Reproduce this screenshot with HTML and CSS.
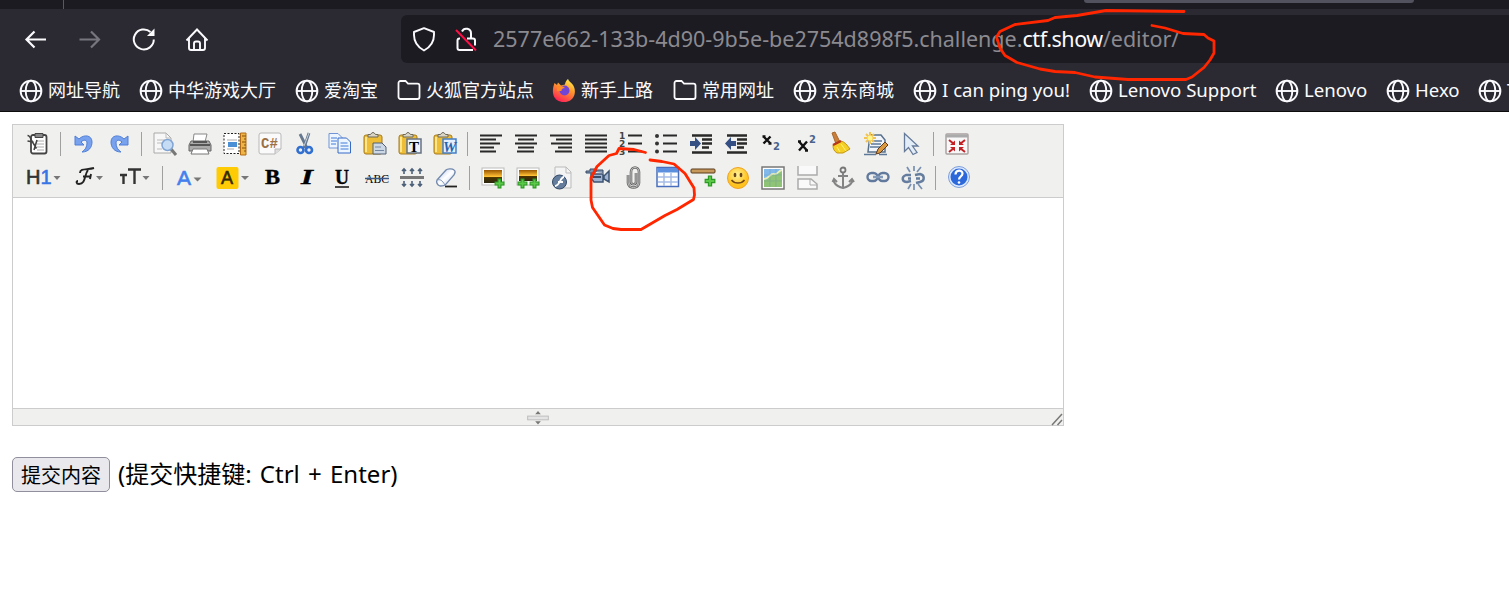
FILE: index.html
```html
<!DOCTYPE html>
<html lang="zh">
<head>
<meta charset="utf-8">
<title>Editor</title>
<link rel="stylesheet" href="styles.css">
</head>
<body>
<svg class="defs" width="0" height="0">
  <defs>
    <linearGradient id="fox" x1=".8" y1="0" x2=".3" y2="1"><stop offset="0" stop-color="#fff44f"/><stop offset=".4" stop-color="#ff9a2a"/><stop offset="1" stop-color="#ff2058"/></linearGradient>
    <linearGradient id="sunset" x1="0" y1="0" x2="0" y2="1"><stop offset="0" stop-color="#9a5600"/><stop offset=".5" stop-color="#ffc034"/><stop offset=".58" stop-color="#4a3300"/><stop offset="1" stop-color="#2c2710"/></linearGradient>
    <linearGradient id="eraser" x1="0" y1="0" x2="1" y2="1"><stop offset="0" stop-color="#a9bfe6"/><stop offset=".5" stop-color="#fff"/><stop offset="1" stop-color="#b8c9e8"/></linearGradient>
    <radialGradient id="face" cx=".45" cy=".35"><stop offset="0" stop-color="#fff49a"/><stop offset="1" stop-color="#ffc31d"/></radialGradient>
    <symbol id="globe" viewBox="0 0 24 24"><g fill="none" stroke="#fbfbfe" stroke-width="1.9"><circle cx="12" cy="12" r="10.4"/><ellipse cx="12" cy="12" rx="5.3" ry="10.4"/><path d="M1.6 12h20.8"/></g></symbol>
    <symbol id="folder" viewBox="0 0 24 24"><path d="M3.5 2h5l2.5 2.6h9.5a2 2 0 0 1 2 2V18a2 2 0 0 1-2 2h-17a2 2 0 0 1-2-2V4a2 2 0 0 1 2-2z" fill="none" stroke="#fbfbfe" stroke-width="1.8"/></symbol>
    <symbol id="board" viewBox="0 0 24 24"><rect x="1" y="3" width="18" height="19" rx="2" fill="#edbd38" stroke="#a57b21"/><path d="M3 5v15" stroke="#ffe68a" stroke-width="2"/><path d="M5 5h10V2.500h-2.500L11 .7H9L7.500 2.500H5z" fill="#d9d6c8" stroke="#6e6a5b"/></symbol>
    <symbol id="plus" viewBox="0 0 10 10"><path d="M3.700 1h2.600v2.700H9v2.600H6.300V9H3.700V6.300H1V3.700h2.700z" fill="#5cc84a" stroke="#2b9a22"/></symbol>
  </defs>
</svg>

<header class="browser">
  <div class="tabs"><i class="tab-line"></i><i class="active-tab"></i></div>
  <div class="nav">
    <div class="nav-buttons">
      <svg viewBox="0 0 24 24"><path d="M22 12.500H2.500M10.500 4.500l-8 8 8 8" fill="none" stroke="#fbfbfe" stroke-width="2.200"/></svg>
      <svg viewBox="0 0 24 24"><path d="M1.500 12.500H21M13 4.500l8 8-8 8" fill="none" stroke="#77767e" stroke-width="2.200"/></svg>
      <svg viewBox="0 0 24 24"><path d="M21.800 12.500A10 10 0 1 1 18.500 5" fill="none" stroke="#fbfbfe" stroke-width="2"/><path d="M22.500 1.500V9H15z" fill="#fbfbfe"/></svg>
      <svg viewBox="0 0 24 24"><path d="M.5 13.500L11 2.500l10.500 11M3 11.500V21a2 2 0 0 0 2 2h12a2 2 0 0 0 2-2v-9.500M8 23v-6.500a2 2 0 0 1 2-2h2a2 2 0 0 1 2 2V23" fill="none" stroke="#fbfbfe" stroke-width="1.900"/></svg>
    </div>
    <div class="address">
      <svg viewBox="0 0 24 24"><path d="M12 1.200L22 5v3c0 8-3.500 12-10 15.500C5.500 20 2 16 2 8V5z" fill="none" stroke="#fbfbfe" stroke-width="1.900" stroke-linejoin="round"/></svg>
      <svg viewBox="0 0 24 24"><path d="M6 11.500H5.500a2 2 0 0 0-2 2V21a2 2 0 0 0 2 2H19M13 11.500h6a2 2 0 0 1 2 2v5M8 4.500a4.700 4.700 0 0 1 9 2v5" fill="none" stroke="#fbfbfe" stroke-width="2"/><path d="M2 3l20 20.500" stroke="#ff0f45" stroke-width="1.900"/></svg>
      <span class="url">2577e662-133b-4d90-9b5e-be2754d898f5.challenge.<b>ctf.show</b>/editor/</span>
    </div>
  </div>
  <nav class="bookmarks">
    <a class="w120"><svg><use href="#globe"/></svg><span>网址导航</span></a>
    <a class="w156"><svg><use href="#globe"/></svg><span>中华游戏大厅</span></a>
    <a class="w102"><svg><use href="#globe"/></svg><span>爱淘宝</span></a>
    <a class="w155"><svg><use href="#folder"/></svg><span>火狐官方站点</span></a>
    <a class="w121"><svg viewBox="0 0 24 24"><path d="M2.500 4l2.500 2 1-2.500 3 3 4-1c0-2 1.500-4.500 3-5.500 1 3 3 3 5 6 4 6 2 17-9 17S-1 13 2.500 4z" fill="url(#fox)"/><circle cx="12.500" cy="11.500" r="5" fill="#7045d5"/><path d="M5 8c3-2 6-1 8 1-2 0-4 1-3.500 3L5 12z" fill="#ff8a28"/></svg><span>新手上路</span></a>
    <a class="w120"><svg><use href="#folder"/></svg><span>常用网址</span></a>
    <a class="w120"><svg><use href="#globe"/></svg><span>京东商城</span></a>
    <a class="w176"><svg><use href="#globe"/></svg><span class="lat">I can ping you!</span></a>
    <a class="w186"><svg><use href="#globe"/></svg><span class="lat">Lenovo Support</span></a>
    <a class="w111"><svg><use href="#globe"/></svg><span class="lat">Lenovo</span></a>
    <a class="w92"><svg><use href="#globe"/></svg><span class="lat">Hexo</span></a>
    <a class="w120"><svg><use href="#globe"/></svg><span class="lat">T</span></a>
  </nav>
</header>

<main>
  <section class="editor">
    <div class="toolbar">
      <div class="row">
        <span class="btn"><svg viewBox="0 0 24 24"><rect x="5" y="3" width="15.500" height="18.500" rx="2" fill="#fff" stroke="#444" stroke-width="1.800"/><path d="M9 1.500h8v4H9z" fill="#888" stroke="#444"/><path d="M11 9h7M11 12h7M11 15h7M11 18h7" stroke="#aaa"/><path d="M1.500 3.500c2 0 3 2 4 5l5 8M1.500 9l6 1M11 8L8 18" fill="none" stroke="#444" stroke-width="1.600"/></svg></span>
        <i class="sep"></i>
        <span class="btn"><svg viewBox="0 0 24 24"><path d="M3 4v9h9l-3-3c3-3 6-2 6 1 0 4-2 7-5 9 7 0 10-5 10-10C20 3 12 2 7 7z" fill="#79a2ee" stroke="#4f7fd6"/></svg></span>
        <span class="btn"><svg viewBox="0 0 24 24"><path d="M21 4v9h-9l3-3c-3-3-6-2-6 1 0 4 2 7 5 9-7 0-10-5-10-10C4 3 12 2 17 7z" fill="#79a2ee" stroke="#4f7fd6"/></svg></span>
        <i class="sep"></i>
        <span class="btn"><svg viewBox="0 0 24 24"><path d="M1 1h12l5 5v15H1z" fill="#f7f7f7" stroke="#aaa"/><path d="M13 1v5h5M4 8h8M4 11h5M4 17h5" fill="none" stroke="#bbb"/><path d="M18 17l5 6" stroke="#777" stroke-width="3"/><circle cx="14.500" cy="13" r="5.500" fill="#c6dcf5" stroke="#80a5d5" stroke-width="1.500"/></svg></span>
        <span class="btn"><svg viewBox="0 0 24 24"><path d="M6 2h13l-2 8H5z" fill="#fff" stroke="#888"/><path d="M3 9h18l2 4v6H1v-6z" fill="#aaa" stroke="#666"/><path d="M2 13h20M5 10h14" stroke="#555" stroke-width="2"/><path d="M5 17h14l2 5H3z" fill="#fff" stroke="#777"/></svg></span>
        <span class="btn"><svg viewBox="0 0 24 24"><path d="M1 1.500h15v20H1z" fill="#fff" stroke="#222" stroke-dasharray="2 1.500"/><path d="M4 8h10M4 17h7" stroke="#aaa"/><path d="M5 10h9v5H5z" fill="#4b8fd5"/><path d="M17.500 1h5.500v22h-5.500z" fill="#edb448" stroke="#b46b11"/><path d="M19 4h4M21 7h2M19 10h4M21 13h2M19 16h4M21 19h2" stroke="#8c4e00"/></svg></span>
        <span class="btn"><svg viewBox="0 0 24 24"><path d="M3 1h18a2 2 0 0 1 2 2v14l-6 5H3a2 2 0 0 1-2-2V3a2 2 0 0 1 2-2z" fill="#fafafa" stroke="#b8b8b8"/><path d="M23 17h-6v5" fill="#ddd" stroke="#bbb"/><text x="3" y="16" class="mono code">C#</text></svg></span>
        <span class="btn"><svg viewBox="0 0 24 24"><path d="M7 2l7 14M16 1l-5 15" stroke="#66788f" stroke-width="2.800"/><path d="M16 1l-5 13" stroke="#c4d0dc"/><ellipse cx="7.500" cy="18" rx="3" ry="3" fill="none" stroke="#316fd0" stroke-width="2.600"/><ellipse cx="16" cy="18" rx="3" ry="3" fill="none" stroke="#316fd0" stroke-width="2.600"/></svg></span>
        <span class="btn"><svg viewBox="0 0 24 24"><g fill="#edf5ff" stroke="#7195d5"><path d="M1 1.500h9l4 4V16H1z"/><path d="M10 6h8.500l4 4v11H10z" stroke="#376bc6"/></g><path d="M3 6h6M3 9h6M3 12h5M12.500 11h7M12.500 14h8M12.500 17h8" stroke="#79a4e4" stroke-width="1.500"/></svg></span>
        <span class="btn"><svg viewBox="0 0 24 24"><use href="#board"/><path d="M10 11h9l4 4v7H10z" fill="#cdd8e6" stroke="#526071"/><path d="M12 15h6M12 18.500h9" stroke="#7488a2"/></svg></span>
        <span class="btn"><svg viewBox="0 0 24 24"><use href="#board"/><path d="M9 7h14v14H9z" fill="#edf2f8" stroke="#657283" stroke-width="1.500"/><text x="11" y="19.500" class="serif letter">T</text></svg></span>
        <span class="btn"><svg viewBox="0 0 24 24"><use href="#board"/><path d="M10 7h13v14H10z" fill="#e2efff" stroke="#447fc6" stroke-width="1.500"/><text x="10" y="19.500" class="serif word" textLength="13">W</text></svg></span>
        <i class="sep"></i>
        <span class="btn"><svg viewBox="0 0 24 24"><path d="M1 3.500h22M1 7.500h16M1 11.500h20M1 15.500h14M1 19.500h16" class="rule"/></svg></span>
        <span class="btn"><svg viewBox="0 0 24 24"><path d="M1 3.500h22M4 7.500h16M1 11.500h22M4 15.500h16M3 19.500h17" class="rule"/></svg></span>
        <span class="btn"><svg viewBox="0 0 24 24"><path d="M1 3.500h22M7 7.500h16M2 11.500h21M9 15.500h14M6 19.500h17" class="rule"/></svg></span>
        <span class="btn"><svg viewBox="0 0 24 24"><path d="M1 3.500h22M1 7.500h22M1 11.500h22M1 15.500h22M1 19.500h22" class="rule"/></svg></span>
        <span class="btn"><svg viewBox="0 0 24 24"><path d="M9 3.500h14M9 11.500h14M9 19.500h14" class="rule"/><text x="0" y="7" class="num">1</text><text x="0" y="15" class="num">2</text><text x="0" y="23" class="num">3</text></svg></span>
        <span class="btn"><svg viewBox="0 0 24 24"><path d="M9 3.500h14M9 11.500h14M9 19.500h14" class="rule"/><g fill="#333"><circle cx="3" cy="4" r="2"/><circle cx="3" cy="11.500" r="2"/><circle cx="3" cy="19.500" r="2"/></g></svg></span>
        <span class="btn"><svg viewBox="0 0 24 24"><path d="M3 3.500h20M13 7.500h10M13 11.500h10M13 15.500h7M3 20.500h20" class="rule heavy"/><path d="M1 9h5V5l6 6.500L6 18v-4H1z" fill="#344f83"/></svg></span>
        <span class="btn"><svg viewBox="0 0 24 24"><path d="M3 3.500h20M13 7.500h10M13 11.500h10M13 15.500h7M3 20.500h20" class="rule heavy"/><path d="M12 9H7V5l-6 6.500L7 18v-4h5z" fill="#344f83"/></svg></span>
        <span class="btn"><svg viewBox="0 0 24 24"><path d="M4.500 4.500l7 7M11.500 4.500l-7 7M3.500 4.500h3M9.500 11.500h3" stroke="#111" stroke-width="2.400"/><text x="14" y="18" class="small">2</text></svg></span>
        <span class="btn"><svg viewBox="0 0 24 24"><path d="M5 9.500l8 9M13 9.500l-8 9M4 9.500h3M11 18.500h3" stroke="#111" stroke-width="2.400"/><text x="15" y="11" class="small">2</text></svg></span>
        <span class="btn"><svg viewBox="0 0 24 24"><path d="M3 1l3-1 5 10-4 2z" fill="#cc7e38" stroke="#a5682c"/><path d="M4 13l8-4c4 1 6 4 9 8l-7 4H8c-3-2-4-4-4-8z" fill="#f6cf24" stroke="#c39712"/><path d="M4 13l8-4" stroke="#b53818" stroke-width="2.500"/><path d="M8 15l3 5M12 12l5 7" stroke="#fff178"/></svg></span>
        <span class="btn"><svg viewBox="0 0 24 24"><path d="M6 3h11l4 5v12H4z" fill="#f2f6fb" stroke="#57708c" stroke-width="1.500"/><path d="M8 9h10M7 12h10M6 15h10M0 22.500h12M15 22.500h8" stroke="#5d7898" stroke-width="1.500"/><path d="M6 0v12M0 6h12M2 2l8 8M10 2l-8 8" stroke="#f2c351" stroke-width="2"/><circle cx="6" cy="6" r="2.500" fill="#fff78b"/><path d="M12 22l2-5 7-7 3 3-8 8z" fill="#db9940" stroke="#5d3a20"/></svg></span>
        <span class="btn"><svg viewBox="0 0 24 24"><path d="M5.500 1.500v18l4-4 4.500 7 4-2-4.500-6.500H19z" fill="#e3edf8" stroke="#667a9a" stroke-width="1.300"/></svg></span>
        <i class="sep"></i>
        <span class="btn"><svg viewBox="0 0 24 24"><rect x="1" y="2" width="22" height="20" rx="1" fill="#f8f8f8" stroke="#aaa1a1" stroke-width="1.500"/><path d="M1 4h22" stroke="#aaa" stroke-width="3"/><path d="M4 8l5 4M20 8l-5 4M4 20l5-4M20 20l-5-4" stroke="#c32125" stroke-width="2"/><path d="M10 8.500V13H5zM14 8.500V13h5zM10 19.500V15H5zM14 19.500V15h5z" fill="#c32125"/></svg></span>
      </div>
      <div class="row lower">
        <span class="btn drop"><svg viewBox="0 0 36 24"><text x="0" y="18" class="head">H<tspan fill="#3775e5">1</tspan></text><path d="M27.500 10h7l-3.500 4z" class="caret"/></svg></span>
        <span class="btn drop"><svg viewBox="0 0 36 24"><path d="M9 7c0-5 7-3 14-5M17 4c-4 5-2 14-9 14-3 0-3-3-1-3M12 10.500h8M20 8l-1 5" fill="none" stroke="#222" stroke-width="1.900"/><path d="M25 10h7l-3.500 4z" class="caret"/></svg></span>
        <span class="btn drop"><svg viewBox="0 0 36 24"><path d="M3 9h7M6.500 9v9M11 3.500h13M17.500 3.500V18" stroke="#333" stroke-width="2.400"/><path d="M25.500 10h7l-3.500 4z" class="caret"/></svg></span>
        <i class="sep"></i>
        <span class="btn color"><svg viewBox="0 0 36 24"><text x="5" y="19" class="fore">A</text><path d="M21.500 11.500h8l-4 4z" class="caret"/></svg></span>
        <span class="btn color"><svg viewBox="0 0 36 24"><rect x="1.500" y="1" width="22" height="22" rx="2" fill="#ffcb05"/><text x="6" y="18" class="back">A</text><path d="M26 10h8l-4 4z" class="caret"/></svg></span>
        <span class="btn"><svg viewBox="0 0 24 24"><text x="5" y="18" class="serif style" textLength="15" lengthAdjust="spacingAndGlyphs">B</text></svg></span>
        <span class="btn"><svg viewBox="0 0 24 24"><text x="6" y="18" class="serif style ital" textLength="12" lengthAdjust="spacingAndGlyphs">I</text></svg></span>
        <span class="btn"><svg viewBox="0 0 24 24"><text x="5" y="17.500" class="serif style" textLength="14" lengthAdjust="spacingAndGlyphs">U</text><path d="M5 21h14" stroke="#111" stroke-width="1.500"/></svg></span>
        <span class="btn"><svg viewBox="0 0 24 24"><text x="0" y="16.500" class="serif abc" textLength="24" lengthAdjust="spacingAndGlyphs">ABC</text><path d="M0 12.500h24" stroke="#3d5a86" stroke-width="1.500"/></svg></span>
        <span class="btn"><svg viewBox="0 0 24 24"><path d="M0 11.500h24" stroke="#777" stroke-width="3"/><path d="M4 8V3M12 8V3M20 8V3M4 15v5M12 15v5M20 15v5M2 5l2-2 2 2M10 5l2-2 2 2M18 5l2-2 2 2M2 18l2 2 2-2M10 18l2 2 2-2M18 18l2 2 2-2" fill="none" stroke="#4c6079" stroke-width="1.600"/></svg></span>
        <span class="btn"><svg viewBox="0 0 24 24"><path d="M2 14L11 4c1-1 6-2 8 0 2 1 1 3 0 5L11 18c-1 2-4 2-6 2-3-1-4-4-3-6z" fill="url(#eraser)" stroke="#7188ad" stroke-width="1.300"/><path d="M2 14c3-1 5 0 8 5" fill="none" stroke="#8298bc"/><path d="M10 20.500h12" stroke="#222" stroke-width="1.800"/></svg></span>
        <i class="sep"></i>
        <span class="btn"><svg viewBox="0 0 24 24"><rect x="1" y="2" width="22" height="17" fill="#fff" stroke="#bbb"/><path d="M3 4h18v13H3z" fill="url(#sunset)"/><use href="#plus" x="13" y="12" width="11" height="11"/></svg></span>
        <span class="btn"><svg viewBox="0 0 24 24"><rect x="1" y="2" width="22" height="17" fill="#fff" stroke="#bbb"/><path d="M3 4h18v11H3z" fill="url(#sunset)"/><use href="#plus" x="1" y="12" width="11" height="11"/><use href="#plus" x="13" y="12" width="11" height="11"/></svg></span>
        <span class="btn"><svg viewBox="0 0 24 24"><path d="M4 1h11l5 5v16H4z" fill="#f4f4f4" stroke="#bbb"/><path d="M15 1v6h5" fill="none" stroke="#bbb"/><ellipse cx="8.500" cy="16" rx="7" ry="7" fill="#657d9c" stroke="#324966"/><path d="M13 11c-4 0-4 9-9 9M7 16h5" fill="none" stroke="#fff" stroke-width="1.800"/></svg></span>
        <span class="btn"><svg viewBox="0 0 24 24"><path d="M0 5h4V3h5v4H0zM10 6V4h7v3" fill="#7e91af" stroke="#394c68"/><path d="M5 8h12v8H8l-3-4zM18 10l5-5v11l-5-3z" fill="#9eb3d1" stroke="#3c5372" stroke-width="1.500"/><path d="M7 11h8" stroke="#394c68" stroke-width="2"/></svg></span>
        <span class="btn"><svg viewBox="0 0 24 24"><path d="M7 9v8c0 6 11 6 11 0V6c0-6-8-6-8 0v10c0 3 5 3 5 0V7" fill="none" stroke="#666" stroke-width="2.600"/><path d="M7 9v8c0 6 11 6 11 0V6c0-6-8-6-8 0v10c0 3 5 3 5 0V7" fill="none" stroke="#c4c4c4"/></svg></span>
        <span class="btn"><svg viewBox="0 0 24 24"><rect x="1" y="1.500" width="21.500" height="19" fill="#fff" stroke="#496fbc" stroke-width="1.500"/><path d="M2 2h20v4.500H2z" fill="#5d8fdf"/><path d="M2 11h20M2 16h20M8 7v13M15 7v13" stroke="#a6bce6" stroke-width="1.500"/></svg></span>
        <span class="btn"><svg viewBox="0 0 24 24"><rect x="0" y="3" width="24" height="4" rx="1" fill="#c79a5b" stroke="#5b3a1b"/><use href="#plus" x="13" y="9" width="12" height="12"/></svg></span>
        <span class="btn"><svg viewBox="0 0 24 24"><circle cx="12" cy="12" r="10.500" fill="url(#face)" stroke="#f0a324"/><ellipse cx="9" cy="9" rx="1.400" ry="2.200" fill="#68451f"/><ellipse cx="15" cy="9" rx="1.400" ry="2.200" fill="#68451f"/><path d="M5.500 14c3 4 10 4 13 0" fill="none" stroke="#754719" stroke-width="1.500"/></svg></span>
        <span class="btn"><svg viewBox="0 0 24 24"><rect x="1" y="1" width="22" height="22" fill="#fff" stroke="#777" stroke-width="1.500"/><path d="M3 3h18v18H3z" fill="#80b9ea"/><path d="M3 14c5 0 6-6 10-5s5-4 8-4v16H3z" fill="#8fc477"/><path d="M3 13c5 0 6-6 10-5s5-4 8-4" fill="none" stroke="#e9efb4" stroke-width="1.800"/><path d="M3 9h18M3 15h18M9 3v18M15 3v18" stroke="#608fa3" opacity=".3"/></svg></span>
        <span class="btn"><svg viewBox="0 0 24 24"><path d="M2 0v9h19V0M2 23V13h13l6 5v5z" fill="#f9f9f9" stroke="#aaa" stroke-width="1.500"/><path d="M14 13v6h7" fill="none" stroke="#aaa"/></svg></span>
        <span class="btn"><svg viewBox="0 0 24 24"><circle cx="12" cy="4" r="2.500" fill="none" stroke="#777" stroke-width="1.800"/><path d="M12 7v15M7 10h10M3 13v3c2 4 5 5 9 6 4-1 7-2 9-6v-3M1.500 16L3 13l3 3M18 16l3-3 2 3" fill="none" stroke="#848484" stroke-width="2"/></svg></span>
        <span class="btn"><svg viewBox="0 0 24 24"><g fill="none" stroke="#61799d" stroke-width="2.400"><rect x="1.500" y="7" width="10" height="8" rx="4"/><rect x="12.500" y="7" width="10" height="8" rx="4"/></g><path d="M7 11h10" stroke="#8299b9" stroke-width="2.500"/></svg></span>
        <span class="btn"><svg viewBox="0 0 24 24"><path d="M10 9H5c-5 2-4 7 1 7l4-1M14 9l5-1c5 1 5 7 0 8l-4 1M7 12.500h3M15 12.500h4" fill="none" stroke="#657d9e" stroke-width="2.400"/><path d="M6 1l3 5M13 0v5M20 1l-4 5M7 23l3-5M13 18v6M17 18l4 5" stroke="#7890af" stroke-width="1.700"/></svg></span>
        <i class="sep"></i>
        <span class="btn"><svg viewBox="0 0 24 24"><circle cx="12" cy="11" r="10.500" fill="#dce9ff" stroke="#7e9edb"/><circle cx="12" cy="11" r="8.500" fill="#2d68da"/><path d="M8.500 8.500c0-5 7-5 7-1 0 3-3.500 3-3.500 6" fill="none" stroke="#fff" stroke-width="2.200"/><circle cx="12" cy="16.500" r="1.300" fill="#fff"/></svg></span>
      </div>
    </div>
    <div class="edit-area"></div>
    <div class="statusbar">
      <svg class="grip" viewBox="0 0 24 16"><path d="M9 4.500L12 1l3 3.500zM9 12l3 3.500 3-3.500z" fill="#777"/><rect x="1" y="6.500" width="22" height="4" fill="#e4e4e4" stroke="#bbb"/></svg>
      <svg class="resize" viewBox="0 0 12 12"><path d="M1 12L11 1M6.500 12L11 7" stroke="#777" stroke-width="1.500"/></svg>
    </div>
  </section>
  <div class="submit"><button>提交内容</button><span class="hint">(提交快捷键: Ctrl + Enter)</span></div>
</main>

<svg class="marks" viewBox="0 0 1509 599">
  <path d="M1184 11.500L1106 10.500L1077 15.500L1055 17.500L1048 20.500L1015 24.500L1000 31.500L996.500 37L1000 48L1005 55.500L1017 62.500L1040 69L1055 71.500L1075 72.500L1095 77L1128 79.500H1186L1192 77L1204 67.500L1210 60L1214 53V41L1208 38L1204 34.500L1183 33.500L1165 28L1152 25.500"/>
  <path d="M645.500 152.500L634 149.500L619 148.500L616.500 153.500L609 155.500L597 166.500L591 178V200L592.500 207.500L604.500 225L613 228.500L621 229.500H641L665 215.500L677 209.500L693.500 199.500L694.500 195L694 188L685 173.500L674 164L662 161.500L650 160"/>
</svg>
</body>
</html>
```
FILE: styles.css
```css
* { box-sizing: border-box; }
body {
  margin: 0;
  height: 599px;
  position: relative;
  overflow: hidden;
  background: #fff;
  color: #000;
  font-family: "Noto Sans", "Noto Sans CJK SC", sans-serif;
}
svg { flex: none; overflow: visible; }
.defs { position: absolute; }

.browser { height: 112px; background: #2b2a33; border-bottom: 1px solid #0c0c0d; overflow: hidden; }
.tabs { height: 9px; background: #1c1b22; display: flex; }
.tab-line { width: 64px; border-right: 1px solid #5a5962; }
.active-tab { width: 330px; height: 3px; margin-left: 1020px; border-radius: 0 0 4px 4px; background: #52525e; }
.nav { height: 60px; display: flex; align-items: center; }
.nav-buttons { width: 401px; padding-left: 24px; display: flex; gap: 30px; }
.nav-buttons svg { width: 24px; height: 24px; }
.address {
  flex: 1;
  height: 48px;
  background: #1c1b22;
  border-radius: 6px 0 0 6px;
  display: flex;
  align-items: center;
  gap: 18px;
  padding-left: 11px;
}
.address svg { width: 24px; height: 24px; }
.url { color: #8b8a90; font-size: 21.500px; white-space: nowrap; margin-left: -3px; padding-bottom: 2px; }
.url b { color: #fbfbfe; font-weight: 400; letter-spacing: -.45px; }

.bookmarks { height: 43px; padding-left: 19px; display: flex; align-items: center; }
.bookmarks a {
  flex: none;
  display: flex;
  align-items: center;
  gap: 5px;
  white-space: nowrap;
  color: #fbfbfe;
  font-size: 18px;
  line-height: 24px;
}
.bookmarks a span { padding-bottom: 2px; }
.bookmarks svg { width: 24px; height: 24px; }
.bookmarks .lat { font-size: 18.600px; }
.w92 { width: 92px; }
.w102 { width: 102px; }
.w111 { width: 111px; }
.w120 { width: 120px; }
.w121 { width: 121px; }
.w155 { width: 155px; }
.w156 { width: 156px; }
.w176 { width: 176px; }
.w186 { width: 186px; }

main { padding: 12px; }
.editor { width: 1052px; height: 302px; border: 1px solid #ccc; display: flex; flex-direction: column; }
.toolbar { height: 73px; background: #f0f0ee; border-bottom: 1px solid #ccc; padding: 2px 0 0 7.500px; }
.row { height: 34px; display: flex; align-items: center; }
.lower { padding-left: .5px; }
.btn { width: 35px; display: flex; justify-content: center; }
.btn svg { width: 24px; height: 24px; }
.drop { width: 45.500px; }
.color { width: 42.750px; }
.drop svg, .color svg { width: 36px; }
.sep { width: 11px; height: 24px; display: flex; justify-content: center; }
.sep::before { content: ""; width: 1px; margin-right: 1px; background: #a0a0a0; }
.edit-area { flex: 1; }
.statusbar { height: 17px; background: #f0f0ee; border-top: 1px solid #ccc; display: flex; align-items: center; justify-content: flex-end; }
.grip { width: 24px; height: 15px; margin-right: 501px; }
.resize { width: 12px; height: 12px; align-self: flex-end; }

.rule { stroke: #292929; stroke-width: 2; }
.heavy { stroke-width: 2.500; }
.caret { fill: #777; }
.serif { font-family: "Liberation Serif", serif; font-weight: 700; }
.mono { font-family: "Liberation Mono", monospace; font-weight: 700; }
.code { font-size: 14px; fill: #9c7145; }
.letter { font-size: 15px; }
.word { font-size: 15px; fill: #2564ad; font-style: italic; }
.num { font: 700 9px "DejaVu Sans", sans-serif; fill: #444; }
.small { font: 700 10px "DejaVu Sans", sans-serif; fill: #4a638c; }
.head { font: 400 20px "Liberation Sans", sans-serif; fill: #333; stroke: #333; stroke-width: .6px; }
.head tspan { stroke: #3775e5; }
.fore { font: 400 21px "Liberation Sans", sans-serif; fill: #4380ed; stroke: #4380ed; stroke-width: .6px; }
.back { font: 400 18px "Liberation Sans", sans-serif; fill: #332a00; stroke: #332a00; stroke-width: .6px; }
.style { font-size: 20px; stroke: #000; stroke-width: .4px; }
.ital { font-style: italic; }
.abc { font-size: 13px; font-weight: 400; }

.submit { margin-top: 31px; display: flex; align-items: center; gap: 8px; }
.submit button {
  width: 98px;
  height: 35px;
  padding: 0;
  border: 1px solid #8f8f9d;
  border-radius: 5px;
  background: #e9e9ed;
  color: #000;
  font: 20px "Noto Sans CJK SC", sans-serif;
}
.hint { font-size: 24px; line-height: 33px; padding-bottom: 2px; white-space: nowrap; word-spacing: 2px; }

.marks { position: absolute; top: 0; left: 0; width: 1509px; height: 599px; pointer-events: none; }
.marks path { fill: none; stroke: #ff2600; stroke-width: 2.800; stroke-linejoin: round; stroke-linecap: round; }
```
